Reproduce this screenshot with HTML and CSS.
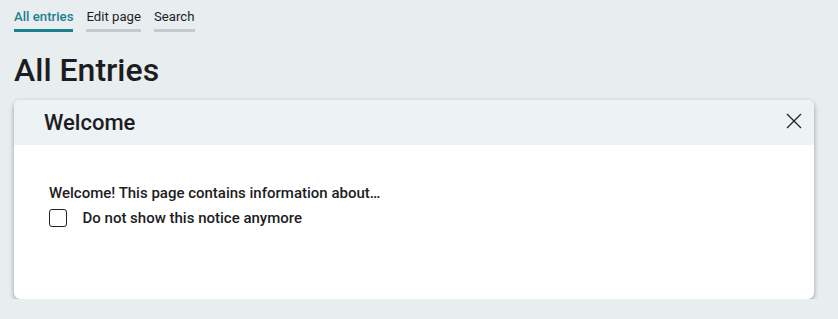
FILE: index.html
```html
<!DOCTYPE html>
<html lang="en">
<head>
    <meta charset="UTF-8">
    <title>All Entries</title>
    <link rel="stylesheet" href="styles.css">
</head>
<body>
    <nav class="tabs">
        <a class="tab active" href="#">All entries</a>
        <a class="tab" href="#">Edit page</a>
        <a class="tab" href="#">Search</a>
    </nav>
    <h1 class="title">All Entries</h1>

    <section class="notice">
        <header class="notice-head">
            <h2>Welcome</h2>
            <button class="close" type="button" aria-label="Close">
                <svg width="16" height="16" viewBox="0 0 16 16">
                    <path d="M1 1 L15 15 M15 1 L1 15" stroke="#222" stroke-width="1.3" fill="none"/>
                </svg>
            </button>
        </header>
        <div class="notice-body">
            <p>Welcome! This page contains information about…</p>
            <label class="check">
                <input type="checkbox">
                <span class="box"></span>
                Do not show this notice anymore
            </label>
        </div>
    </section>
</body>
</html>
```

FILE: styles.css
```css
body {
    font-family: 'Roboto', 'Liberation Sans', sans-serif;
    background-color: #e8edf0;
    color: #1d1d1f;
    margin: 0;
    padding: 0 24px 0 14px;
}
.tabs {
    display: flex;
    gap: 13px;
    padding-top: 9px;
}
.tab {
    font-size: 13.2px;
    color: #1d1d1f;
    text-decoration: none;
    padding-bottom: 4px;
    border-bottom: 3px solid #c5cacd;
    line-height: 16px;
}
.tab.active {
    color: #1b8190;
    font-weight: 500;
    border-bottom-color: #1b8190;
}
.title {
    font-size: 32px;
    font-weight: 500;
    margin: 19px 0 11px;
    line-height: 38px;
}
.notice {
    background-color: #fff;
    border-radius: 6px;
    box-shadow: 0 2px 5px rgba(0, 0, 0, 0.35);
    overflow: hidden;
    height: 199px;
}
.notice-head {
    background-color: #edf2f5;
    height: 45px;
    display: flex;
    align-items: center;
    justify-content: space-between;
    padding: 0 12px 0 30px;
}
.notice-head h2 {
    margin: 0;
    font-size: 22px;
    font-weight: 500;
}
.close {
    border: none;
    background: none;
    padding: 0;
    width: 16px;
    height: 16px;
    margin-top: -4px;
    cursor: pointer;
}
.notice-body {
    padding: 38px 35px;
    font-size: 15px;
    font-weight: 500;
}
.notice-body p {
    margin: 0 0 5px;
    line-height: 20px;
}
.check {
    display: flex;
    align-items: center;
    gap: 16px;
    line-height: 20px;
}
.check input {
    display: none;
}
.box {
    width: 15.5px;
    height: 15.5px;
    border: 1.5px solid #222;
    border-radius: 3px;
}
```
